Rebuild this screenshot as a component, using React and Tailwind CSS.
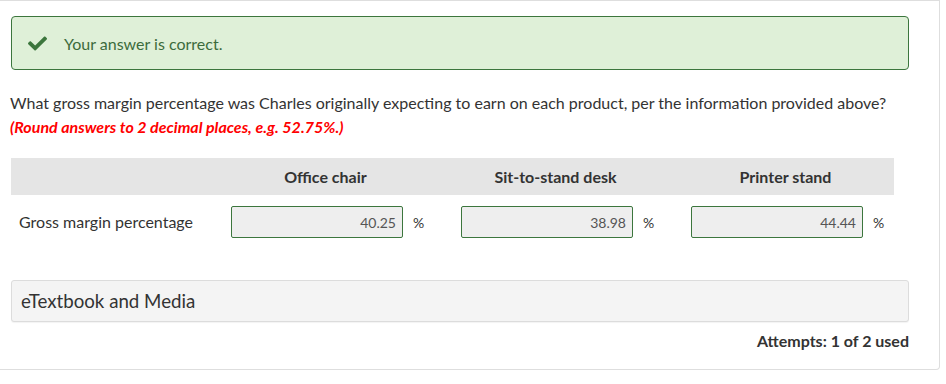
import React from "react";
import { FaCheck } from "react-icons/fa";

const font = { fontFamily: "Lato, 'Open Sans', Arial, sans-serif" };

function Cell({ value }) {
  return (
    <div className="flex items-center">
      <div className="w-[172px] h-[32px] border border-[#3c763d] bg-[#eeeeee] rounded-[2px] flex items-center justify-end pr-[6px] text-[14px] text-[#555]">
        {value}
      </div>
      <span className="ml-[10px] text-[14px] text-[#333]">%</span>
    </div>
  );
}

export default function App() {
  return (
    <div className="w-[946px] h-[384px] bg-white text-[#333]" style={font}>
      <div className="w-[940px] h-[370px] border border-l-0 border-[#dedede] rounded-br-[4px] bg-white">
        <div className="ml-[11px] mt-[15px] w-[898px] h-[54px] border border-[#3c763d] bg-[#dff0d8] rounded-[4px] flex items-center">
          <FaCheck className="ml-[16px] text-[#3c763d]" size={19} />
          <span className="ml-[17px] text-[16px] text-[#3c6b3c] mt-[1px]">Your answer is correct.</span>
        </div>
        <div className="ml-[10px] mt-[21px] text-[16px] leading-[24px] text-[#333]">
          <div>What gross margin percentage was Charles originally expecting to earn on each product, per the information provided above?</div>
          <div className="text-[#ff0000] font-bold italic">(Round answers to 2 decimal places, e.g. 52.75%.)</div>
        </div>
        <div className="ml-[11px] mt-[19px] w-[883px]">
          <div className="h-[37px] bg-[#e5e5e5] grid grid-cols-[220px_230px_230px_203px] items-center font-bold text-[16px] text-[#333]">
            <div></div>
            <div className="w-[189px] text-center">Office chair</div>
            <div className="w-[189px] text-center">Sit-to-stand desk</div>
            <div className="w-[189px] text-center">Printer stand</div>
          </div>
          <div className="mt-[11px] grid grid-cols-[220px_230px_230px_203px] items-center text-[16px]">
            <div className="pl-[8px]">Gross margin percentage</div>
            <Cell value="40.25" />
            <Cell value="38.98" />
            <Cell value="44.44" />
          </div>
        </div>
        <div className="ml-[11px] mt-[42px] w-[898px] h-[42px] bg-[#f4f4f4] border border-[#dcdcdc] rounded-[3px] shadow-[0_1px_1px_rgba(0,0,0,0.05)] flex items-center pl-[9px] text-[18.7px] text-[#333]">
          eTextbook and Media
        </div>
        <div className="w-[909px] mt-[7px] text-right font-bold text-[16px] text-[#333]">
          Attempts: 1 of 2 used
        </div>
      </div>
    </div>
  );
}
